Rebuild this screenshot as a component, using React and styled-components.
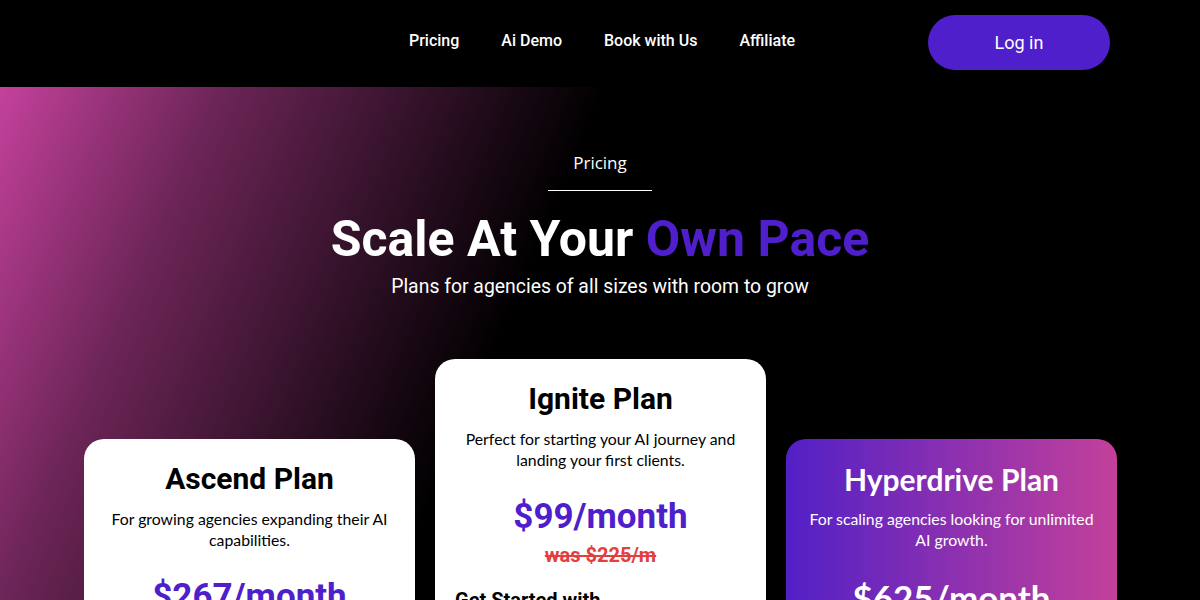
import React from "react";
import styled, { createGlobalStyle, css } from "styled-components";

const Global = createGlobalStyle`
  html, body { margin: 0; padding: 0; background: #000; }
  body { font-family: Roboto, "Liberation Sans", sans-serif; color: #fff; }
  * { box-sizing: border-box; }
`;

const Page = styled.div`
  width: 1200px;
  min-height: 600px;
  background: #000;
  overflow: hidden;
`;

const Header = styled.header`
  height: 87px;
  display: grid;
  grid-template-columns: 1fr auto 1fr;
  align-items: center;
  padding: 0 90px 0 94px;
  background: #000;
`;

const NavLinks = styled.nav`
  grid-column: 2;
  display: flex;
  gap: 42px;
  margin-top: -6px;
`;

const NavLink = styled.a`
  font-family: Roboto, sans-serif;
  font-weight: 500;
  font-size: 16px;
  color: #fff;
  text-decoration: none;
`;

const LoginButton = styled.button`
  grid-column: 3;
  justify-self: end;
  width: 182px;
  height: 55px;
  border: none;
  border-radius: 28px;
  background: #4f1fcb;
  color: #fff;
  font-family: Roboto, sans-serif;
  font-size: 18px;
  font-weight: 400;
  margin-top: -2px;
`;

const Hero = styled.section`
  background: linear-gradient(
    113deg,
    #c4419c 0px,
    #6c2557 205px,
    #000 560px
  );
  padding: 64px 84px 40px;
  display: flex;
  flex-direction: column;
  align-items: center;
`;

const Eyebrow = styled.div`
  width: 104px;
  text-align: center;
  font-family: "Open Sans", sans-serif;
  font-size: 17px;
  color: #fff;
  padding-bottom: 16px;
  border-bottom: 1px solid #fff;
`;

const Title = styled.h1`
  margin: 18px 0 0;
  font-family: Roboto, sans-serif;
  font-weight: 700;
  font-size: 50px;
  line-height: 60px;
  color: #fff;
  text-align: center;
`;

const Accent = styled.span`
  color: #4f1fcb;
`;

const Subtitle = styled.p`
  margin: 3px 0 0;
  font-family: Roboto, sans-serif;
  font-size: 19.4px;
  line-height: 30px;
  color: #fff;
`;

const Cards = styled.div`
  margin-top: 57px;
  width: 100%;
  display: flex;
  align-items: flex-start;
  gap: 20px;
`;

const Card = styled.div`
  flex: 0 0 331px;
  border-radius: 20px;
  padding: 22px 20px 30px;
  margin-top: ${(p) => (p.$raised ? "0" : "80px")};
  display: flex;
  flex-direction: column;
  align-items: center;
  min-height: 420px;
  ${(p) =>
    p.$variant === "accent"
      ? css`
          background: linear-gradient(90deg, #5220c7 0%, #c3409a 100%);
          color: #fff;
        `
      : css`
          background: #fff;
          color: #000;
        `}
`;

const PlanName = styled.h2`
  margin: 0;
  font-family: ${(p) => (p.$lato ? "Lato, sans-serif" : "Roboto, sans-serif")};
  font-weight: 700;
  font-size: 30px;
  line-height: 36px;
  text-align: center;
`;

const PlanDesc = styled.p`
  margin: 11px 0 0;
  font-family: Lato, sans-serif;
  font-size: 15.8px;
  line-height: 21px;
  text-align: center;
`;

const Price = styled.div`
  margin-top: 25px;
  font-family: ${(p) => (p.$lato ? "Lato, sans-serif" : "Roboto, sans-serif")};
  font-weight: 700;
  font-size: 35px;
  line-height: 44px;
  color: ${(p) => (p.$light ? "#fff" : "#4f1fcb")};
`;

const OldPrice = styled.div`
  margin-top: 3px;
  font-family: Roboto, sans-serif;
  font-weight: 700;
  font-size: 20px;
  line-height: 26px;
  color: #e53e3e;
  text-decoration: line-through;
`;

const SectionLabel = styled.div`
  align-self: stretch;
  margin-top: 19px;
  font-family: Roboto, sans-serif;
  font-weight: 700;
  font-size: 20px;
  line-height: 26px;
`;

const Feature = styled.div`
  align-self: stretch;
  margin-top: 8px;
  font-family: Lato, sans-serif;
  font-size: 15px;
`;

const plans = [
  {
    name: "Ascend Plan",
    desc: "For growing agencies expanding their AI capabilities.",
    price: "$267/month",
  },
  {
    name: "Ignite Plan",
    desc: "Perfect for starting your AI journey and landing your first clients.",
    price: "$99/month",
    old: "was $225/m",
    raised: true,
  },
  {
    name: "Hyperdrive Plan",
    desc: "For scaling agencies looking for unlimited AI growth.",
    price: "$625/month",
    accent: true,
  },
];

export default function App() {
  return (
    <Page>
      <Global />
      <Header>
        <NavLinks>
          <NavLink href="#">Pricing</NavLink>
          <NavLink href="#">Ai Demo</NavLink>
          <NavLink href="#">Book with Us</NavLink>
          <NavLink href="#">Affiliate</NavLink>
        </NavLinks>
        <LoginButton>Log in</LoginButton>
      </Header>
      <Hero>
        <Eyebrow>Pricing</Eyebrow>
        <Title>
          Scale At Your <Accent>Own Pace</Accent>
        </Title>
        <Subtitle>Plans for agencies of all sizes with room to grow</Subtitle>
        <Cards>
          {plans.map((p) => (
            <Card
              key={p.name}
              $raised={p.raised}
              $variant={p.accent ? "accent" : "plain"}
            >
              <PlanName $lato={p.accent}>{p.name}</PlanName>
              <PlanDesc>{p.desc}</PlanDesc>
              <Price $light={p.accent} $lato={p.accent}>
                {p.price}
              </Price>
              {p.old && <OldPrice>{p.old}</OldPrice>}
              <SectionLabel>Get Started with</SectionLabel>
              <Feature>AI voice agents</Feature>
            </Card>
          ))}
        </Cards>
      </Hero>
    </Page>
  );
}
